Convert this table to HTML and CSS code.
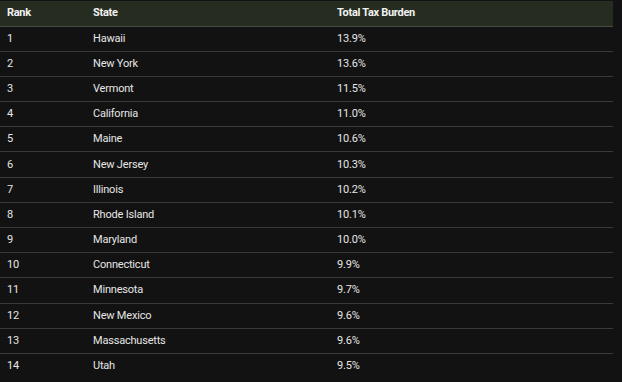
FILE: index.html
```html
<!DOCTYPE html>
<html>
<head>
<meta charset="utf-8">
<link rel="stylesheet" href="styles.css">
</head>
<body>
<table class="tax-table">
  <thead>
    <tr><th class="c-rank">Rank</th><th class="c-state">State</th><th class="c-tax">Total Tax Burden</th></tr>
  </thead>
  <tbody>
    <tr><td>1</td><td>Hawaii</td><td>13.9%</td></tr>
    <tr><td>2</td><td>New York</td><td>13.6%</td></tr>
    <tr><td>3</td><td>Vermont</td><td>11.5%</td></tr>
    <tr><td>4</td><td>California</td><td>11.0%</td></tr>
    <tr><td>5</td><td>Maine</td><td>10.6%</td></tr>
    <tr><td>6</td><td>New Jersey</td><td>10.3%</td></tr>
    <tr><td>7</td><td>Illinois</td><td>10.2%</td></tr>
    <tr><td>8</td><td>Rhode Island</td><td>10.1%</td></tr>
    <tr><td>9</td><td>Maryland</td><td>10.0%</td></tr>
    <tr><td>10</td><td>Connecticut</td><td>9.9%</td></tr>
    <tr><td>11</td><td>Minnesota</td><td>9.7%</td></tr>
    <tr><td>12</td><td>New Mexico</td><td>9.6%</td></tr>
    <tr><td>13</td><td>Massachusetts</td><td>9.6%</td></tr>
    <tr><td>14</td><td>Utah</td><td>9.5%</td></tr>
  </tbody>
</table>
</body>
</html>
```
FILE: styles.css
```css
html, body {
  margin: 0;
  padding: 0;
  background: #121212;
}
body {
  padding-top: 1px;
  font-family: Roboto, "Liberation Sans", sans-serif;
  font-size: 11px;
  color: #e6e6e6;
}
.tax-table {
  width: 613px;
  border-collapse: collapse;
  table-layout: fixed;
}
.tax-table th,
.tax-table td {
  box-sizing: border-box;
}
.c-rank { width: 86px; }
.c-state { width: 244px; }
.c-tax { width: 283px; }
.tax-table th {
  background: #272c20;
  color: #f2f2f2;
  font-weight: 700;
  text-align: left;
  height: 25px;
  padding: 0 0 1px 7px;
  border-bottom: 1px solid #474a45;
  letter-spacing: -0.3px;
}
.tax-table td {
  height: 25.2px;
  padding: 0 0 1px 7px;
  border-bottom: 1px solid #3a3a3a;
  letter-spacing: -0.2px;
}
.tax-table tbody tr:last-child td {
  border-bottom: none;
}
```
